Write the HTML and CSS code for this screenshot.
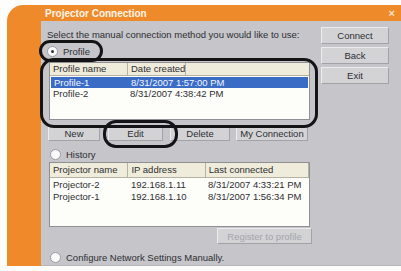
FILE: index.html
```html
<!DOCTYPE html>
<html lang="en">
<head>
    <meta charset="UTF-8">
    <title>Projector Connection</title>
    <link rel="stylesheet" href="styles.css">
</head>
<body>
    <div class="window">
        <div class="titlebar">
            <span class="title">Projector Connection</span>
            <span class="close">&#215;</span>
        </div>
        <div class="side"></div>
        <div class="content">
            <div class="main">
                <div class="prompt">Select the manual connection method you would like to use:</div>

                <label class="radio radio-profile"><span class="dot checked"></span>Profile</label>

                <div class="list list-profile">
                    <div class="row head">
                        <div class="cell c-name">Profile name</div>
                        <div class="cell">Date created</div>
                    </div>
                    <div class="row selected">
                        <div class="cell c-name">Profile-1</div>
                        <div class="cell">8/31/2007 1:57:00 PM</div>
                    </div>
                    <div class="row">
                        <div class="cell c-name">Profile-2</div>
                        <div class="cell">8/31/2007 4:38:42 PM</div>
                    </div>
                </div>

                <div class="btn-row">
                    <div class="btn b-new">New</div>
                    <div class="btn b-edit">Edit</div>
                    <div class="btn b-delete">Delete</div>
                    <div class="btn b-my">My Connection</div>
                </div>

                <label class="radio radio-history"><span class="dot"></span>History</label>

                <div class="list list-history">
                    <div class="row head">
                        <div class="cell c-proj">Projector name</div>
                        <div class="cell c-ip">IP address</div>
                        <div class="cell">Last connected</div>
                    </div>
                    <div class="row">
                        <div class="cell c-proj">Projector-2</div>
                        <div class="cell c-ip">192.168.1.11</div>
                        <div class="cell">8/31/2007 4:33:21 PM</div>
                    </div>
                    <div class="row">
                        <div class="cell c-proj">Projector-1</div>
                        <div class="cell c-ip">192.168.1.10</div>
                        <div class="cell">8/31/2007 1:56:34 PM</div>
                    </div>
                </div>

                <div class="register-row">
                    <div class="btn disabled">Register to profile</div>
                </div>

                <label class="radio radio-manual"><span class="dot"></span>Configure Network Settings Manually.</label>
            </div>

            <div class="actions">
                <div class="btn">Connect</div>
                <div class="btn">Back</div>
                <div class="btn">Exit</div>
            </div>
        </div>

        <!-- black callout rings drawn over the dialog -->
        <div class="ring ring-profile"></div>
        <div class="ring ring-list"></div>
        <div class="ring ring-edit"></div>
    </div>
</body>
</html>
```

FILE: styles.css
```css
body {
    margin: 0;
    background: #fdfdfb;
    font-family: "Liberation Sans", Arial, sans-serif;
    font-size: 9.5px;
    color: #2e2e32;
}

.window {
    position: relative;
    margin: 5px 0 0 7px;
    width: 394px;
    height: 261px;
    background: #ef8a2b;
    border-radius: 16px 0 0 0;
    display: grid;
    grid-template-columns: 34px 1fr;
    grid-template-rows: 16px 1fr;
}

.titlebar {
    grid-column: 1 / 3;
    display: flex;
    align-items: center;
    justify-content: space-between;
    padding: 0 6px 0 38px;
}

.title {
    color: #fff6ea;
    font-weight: bold;
    font-size: 10px;
}

.close {
    color: #fbe3cc;
    font-weight: bold;
    font-size: 11px;
}

.side {
    background: #f0892a;
}

.content {
    background: #c5c5ca;
    display: flex;
    padding: 6px 0 0 6px;
    border-bottom: 1px solid #b7b7bb;
}

.main {
    width: 270px;
    display: flex;
    flex-direction: column;
}

.prompt {
    height: 14px;
    line-height: 14px;
    margin-top: 1px;
}

.radio {
    display: flex;
    align-items: center;
    gap: 5px;
    height: 12px;
}

.radio-profile {
    margin-top: 3px;
}

.radio-history {
    margin: 7px 0 0 3px;
}

.radio-manual {
    margin: 7px 0 0 3px;
}

.dot {
    width: 9px;
    height: 9px;
    border-radius: 50%;
    background: #fbfbfb;
    border: 1px solid #9a9aa0;
    display: flex;
    align-items: center;
    justify-content: center;
}

.dot.checked::after {
    content: "";
    width: 3px;
    height: 3px;
    border-radius: 50%;
    background: #333;
}

.list {
    margin-left: 2px;
    width: 261px;
    background: #fdfdfa;
    border: 1px solid #8f8f94;
    box-sizing: border-box;
}

.list-profile {
    margin-top: 5px;
    height: 58px;
}

.list-history {
    margin-top: 2px;
    height: 65px;
}

.row {
    display: flex;
    height: 11px;
    line-height: 11px;
}

.list-history .row {
    height: 12px;
    line-height: 12px;
}

.row.head {
    height: 12px;
    line-height: 12px;
    background: #efecdb;
    border-bottom: 1px solid #b5b2a4;
    margin-bottom: 1px;
}

.list-history .row.head {
    height: 14px;
    line-height: 14px;
    margin-bottom: 1px;
}

.cell {
    padding-left: 3px;
    white-space: nowrap;
    overflow: hidden;
}

.head .cell {
    border-right: 1px solid #b5b2a4;
}

.c-name {
    width: 74px;
}

.c-proj {
    width: 75px;
}

.c-ip {
    width: 74px;
}

.row.selected {
    background: #3a6cc6;
    color: #f4f6ff;
    margin: 0 1px;
}

.list-history .head .cell:last-child {
    width: 100px;
}

.btn {
    height: 16px;
    line-height: 15px;
    box-sizing: border-box;
    text-align: center;
    background: #d3d3d6;
    border: 1px solid #a2a2a8;
    border-top-color: #ececee;
    border-left-color: #ececee;
}

.btn-row {
    display: flex;
    margin: 5px 0 0 1px;
}

.b-new {
    width: 52px;
}

.b-edit {
    width: 55px;
    margin-left: 8px;
}

.b-delete {
    width: 60px;
    margin-left: 7px;
}

.b-my {
    width: 72px;
    margin-left: 6px;
}

.register-row {
    display: flex;
    justify-content: flex-end;
    width: 265px;
    margin-top: 1px;
}

.btn.disabled {
    width: 95px;
    color: #a4a4a8;
}

.actions {
    margin-left: 4px;
    display: flex;
    flex-direction: column;
    gap: 3px;
}

.actions .btn {
    width: 68px;
    height: 17px;
    line-height: 16px;
}

.ring {
    position: absolute;
    border: 3px solid #141416;
    box-sizing: border-box;
}

.ring-profile {
    left: 32px;
    top: 35px;
    width: 64px;
    height: 22px;
    border-radius: 11px;
}

.ring-list {
    left: 33px;
    top: 53px;
    width: 278px;
    height: 70px;
    border-radius: 14px;
}

.ring-edit {
    left: 96px;
    top: 115px;
    width: 75px;
    height: 28px;
    border-radius: 13px;
}
```
